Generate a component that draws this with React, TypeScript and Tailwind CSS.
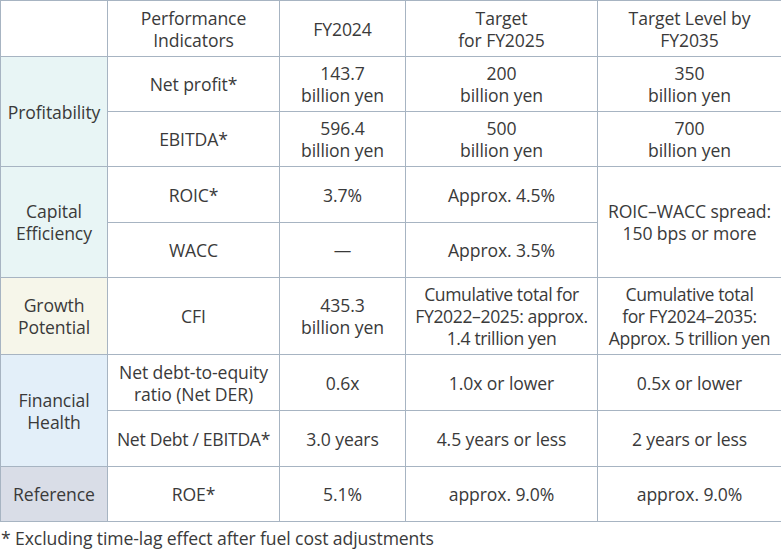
import React from "react";

const B = "border border-[#a7b4c2]";
const cell = `${B} text-center align-middle px-1`;

export default function App() {
  return (
    <div className="w-[781px] h-[554px] bg-white text-[#3a3a3a] text-[17.6px] leading-[22px] tracking-[-0.1px]" style={{ fontFamily: "'Open Sans', Lato, sans-serif" }}>
      <table className="border-collapse table-fixed w-[781px]">
        <colgroup>
          <col className="w-[107px]" />
          <col className="w-[172px]" />
          <col className="w-[126px]" />
          <col className="w-[192px]" />
          <col className="w-[184px]" />
        </colgroup>
        <tbody>
          <tr className="h-[56px]">
            <td className={cell}></td>
            <td className={cell}>Performance<br />Indicators</td>
            <td className={cell}>FY2024</td>
            <td className={cell}>Target<br />for FY2025</td>
            <td className={`${cell} whitespace-nowrap`}>Target Level by<br />FY2035</td>
          </tr>
          <tr className="h-[55px]">
            <td rowSpan={2} className={`${cell} px-0 whitespace-nowrap bg-[#e8f5f5]`}>Profitability</td>
            <td className={cell}>Net profit*</td>
            <td className={cell}>143.7<br />billion yen</td>
            <td className={cell}>200<br />billion yen</td>
            <td className={cell}>350<br />billion yen</td>
          </tr>
          <tr className="h-[55px]">
            <td className={cell}>EBITDA*</td>
            <td className={cell}>596.4<br />billion yen</td>
            <td className={cell}>500<br />billion yen</td>
            <td className={cell}>700<br />billion yen</td>
          </tr>
          <tr className="h-[56px]">
            <td rowSpan={2} className={`${cell} bg-[#e8f5f5]`}>Capital<br />Efficiency</td>
            <td className={cell}>ROIC*</td>
            <td className={cell}>3.7%</td>
            <td className={cell}>Approx. 4.5%</td>
            <td rowSpan={2} className={`${cell} whitespace-nowrap`}>ROIC–WACC spread:<br />150 bps or more</td>
          </tr>
          <tr className="h-[55px]">
            <td className={cell}>WACC</td>
            <td className={cell}>—</td>
            <td className={cell}>Approx. 3.5%</td>
          </tr>
          <tr className="h-[77px]">
            <td className={`${cell} bg-[#f6f6ea]`}>Growth<br />Potential</td>
            <td className={cell}>CFI</td>
            <td className={cell}>435.3<br />billion yen</td>
            <td className={`${cell} px-0 whitespace-nowrap tracking-[-0.4px]`}>Cumulative total for<br />FY2022–2025: approx.<br />1.4 trillion yen</td>
            <td className={`${cell} px-0 whitespace-nowrap tracking-[-0.4px]`}>Cumulative total<br />for FY2024–2035:<br />Approx. 5 trillion yen</td>
          </tr>
          <tr className="h-[56px]">
            <td rowSpan={2} className={`${cell} bg-[#e3eff9]`}>Financial<br />Health</td>
            <td className={`${cell} whitespace-nowrap`}>Net debt-to-equity<br />ratio (Net DER)</td>
            <td className={cell}>0.6x</td>
            <td className={cell}>1.0x or lower</td>
            <td className={cell}>0.5x or lower</td>
          </tr>
          <tr className="h-[56px]">
            <td className={`${cell} px-0 whitespace-nowrap tracking-[-0.3px]`}>Net Debt / EBITDA*</td>
            <td className={cell}>3.0 years</td>
            <td className={cell}>4.5 years or less</td>
            <td className={cell}>2 years or less</td>
          </tr>
          <tr className="h-[55px]">
            <td className={`${cell} bg-[#d9dde7]`}>Reference</td>
            <td className={cell}>ROE*</td>
            <td className={cell}>5.1%</td>
            <td className={cell}>approx. 9.0%</td>
            <td className={cell}>approx. 9.0%</td>
          </tr>
        </tbody>
      </table>
      <div className="pt-[5px] pl-[1px]">* Excluding time-lag effect after fuel cost adjustments</div>
    </div>
  );
}
